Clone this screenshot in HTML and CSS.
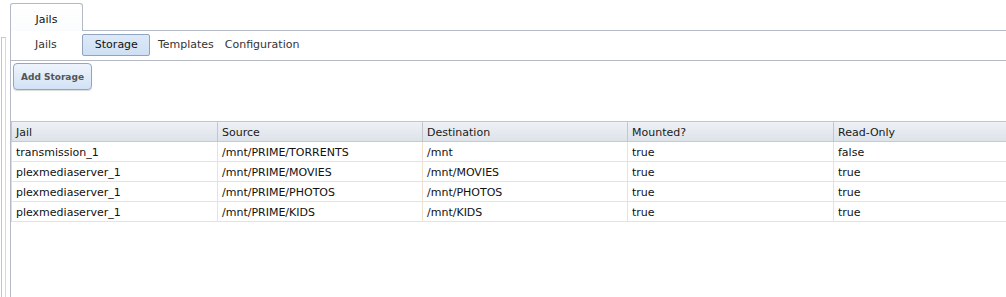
FILE: index.html
```html
<!DOCTYPE html>
<html>
<head>
<meta charset="utf-8">
<link rel="stylesheet" href="styles.css">
</head>
<body>
<div class="app">
  <div class="side"></div>
  <div class="main">
    <div class="tabs">
      <div class="tab">Jails</div>
      <div class="tabfill"></div>
    </div>
    <div class="pane">
      <div class="subnav">
        <span class="item item-jails">Jails</span>
        <span class="item item-active">Storage</span>
        <span class="item item-templates">Templates</span>
        <span class="item item-config">Configuration</span>
      </div>
      <div class="toolbar">
        <button class="btn">Add Storage</button>
      </div>
      <table class="grid">
        <thead>
          <tr><th class="c1">Jail</th><th class="c2">Source</th><th class="c3">Destination</th><th class="c4">Mounted?</th><th class="c5">Read-Only</th></tr>
        </thead>
        <tbody>
          <tr><td>transmission_1</td><td>/mnt/PRIME/TORRENTS</td><td>/mnt</td><td>true</td><td>false</td></tr>
          <tr><td>plexmediaserver_1</td><td>/mnt/PRIME/MOVIES</td><td>/mnt/MOVIES</td><td>true</td><td>true</td></tr>
          <tr><td>plexmediaserver_1</td><td>/mnt/PRIME/PHOTOS</td><td>/mnt/PHOTOS</td><td>true</td><td>true</td></tr>
          <tr><td>plexmediaserver_1</td><td>/mnt/PRIME/KIDS</td><td>/mnt/KIDS</td><td>true</td><td>true</td></tr>
        </tbody>
      </table>
    </div>
  </div>
</div>
</body>
</html>
```
FILE: styles.css
```css
html, body {
  margin: 0;
  padding: 0;
  background: #fff;
  overflow: hidden;
  height: 297px;
}
body {
  font-family: "DejaVu Sans", Verdana, sans-serif;
  font-size: 11px;
  color: #222;
}
.app {
  display: flex;
  height: 297px;
}
.side {
  width: 3px;
  margin-top: 37px;
  margin-left: 1px;
  border-top: 1px solid #c8c8c8;
  border-left: 1px solid #c4c4c4;
  border-right: 1px solid #d8d8d8;
  margin-right: 4px;
}
.main {
  flex: 1;
  min-width: 0;
  display: flex;
  flex-direction: column;
}
.tabs {
  display: flex;
  padding-top: 3px;
  height: 31px;
  box-sizing: border-box;
  flex: none;
}
.tab {
  width: 73px;
  height: 28px;
  box-sizing: border-box;
  border: 1px solid #b3bac6;
  border-bottom: none;
  border-radius: 3px 3px 0 0;
  background: linear-gradient(#ffffff, #fbfcfd);
  text-align: center;
  line-height: 32px;
  color: #111;
}
.tabfill {
  flex: 1;
  border-bottom: 1px solid #b3bac6;
}
.pane {
  flex: 1;
  border-left: 1px solid #b3bac6;
  overflow: hidden;
}
.subnav {
  display: flex;
  align-items: center;
  height: 29px;
  border-bottom: 1px solid #b3bac6;
  padding-left: 24px;
  padding-bottom: 1px;
  box-sizing: content-box;
  color: #333;
}
.subnav { height: 28px; }
.item {
  line-height: 20px;
  white-space: nowrap;
}
.item-jails { margin-right: 25px; }
.item-active {
  padding: 0 11px 0 12px;
  border: 1px solid #8ea4c0;
  border-radius: 2px;
  background: linear-gradient(#dde9f7, #cfe0f4);
  color: #111;
}
.item-templates { margin-left: 8px; }
.item-config { margin-left: 11px; }
.toolbar {
  height: 60px;
  padding: 2px 0 0 2px;
  box-sizing: border-box;
}
.btn {
  width: 79px;
  height: 27px;
  box-sizing: border-box;
  font-family: "DejaVu Sans", Verdana, sans-serif;
  font-size: 9px;
  font-weight: bold;
  color: #555;
  border: 1px solid #8fa7c6;
  border-radius: 4px;
  background: linear-gradient(#eef4fc, #d2e2f5);
  box-shadow: 0 1px 1px rgba(0,0,0,0.15);
  padding: 0;
}
.grid {
  border-collapse: separate;
  border-spacing: 0;
  table-layout: fixed;
  width: 1027px;
}
.grid th, .grid td {
  text-align: left;
  font-weight: normal;
  padding: 1px 0 0 4px;
  white-space: nowrap;
  overflow: hidden;
  box-sizing: border-box;
}
.grid th {
  height: 21px;
  background: linear-gradient(#eef1f5, #dde3ea);
  border-top: 1px solid #c2c5ca;
  border-bottom: 1px solid #c6cad0;
  border-left: 1px solid #c3c7cd;
  color: #1a1a1a;
}
.grid td {
  height: 20px;
  border-bottom: 1px solid #f0e0cf;
  border-left: 1px solid #f0e0cf;
  color: #111;
}
.grid th.c1 { width: 206px; }
.grid th.c2 { width: 205px; }
.grid th.c3 { width: 205px; }
.grid th.c4 { width: 206px; }
.grid th.c5 { width: 205px; }
.grid tr td:first-child { border-left-color: #ddd; }
```
